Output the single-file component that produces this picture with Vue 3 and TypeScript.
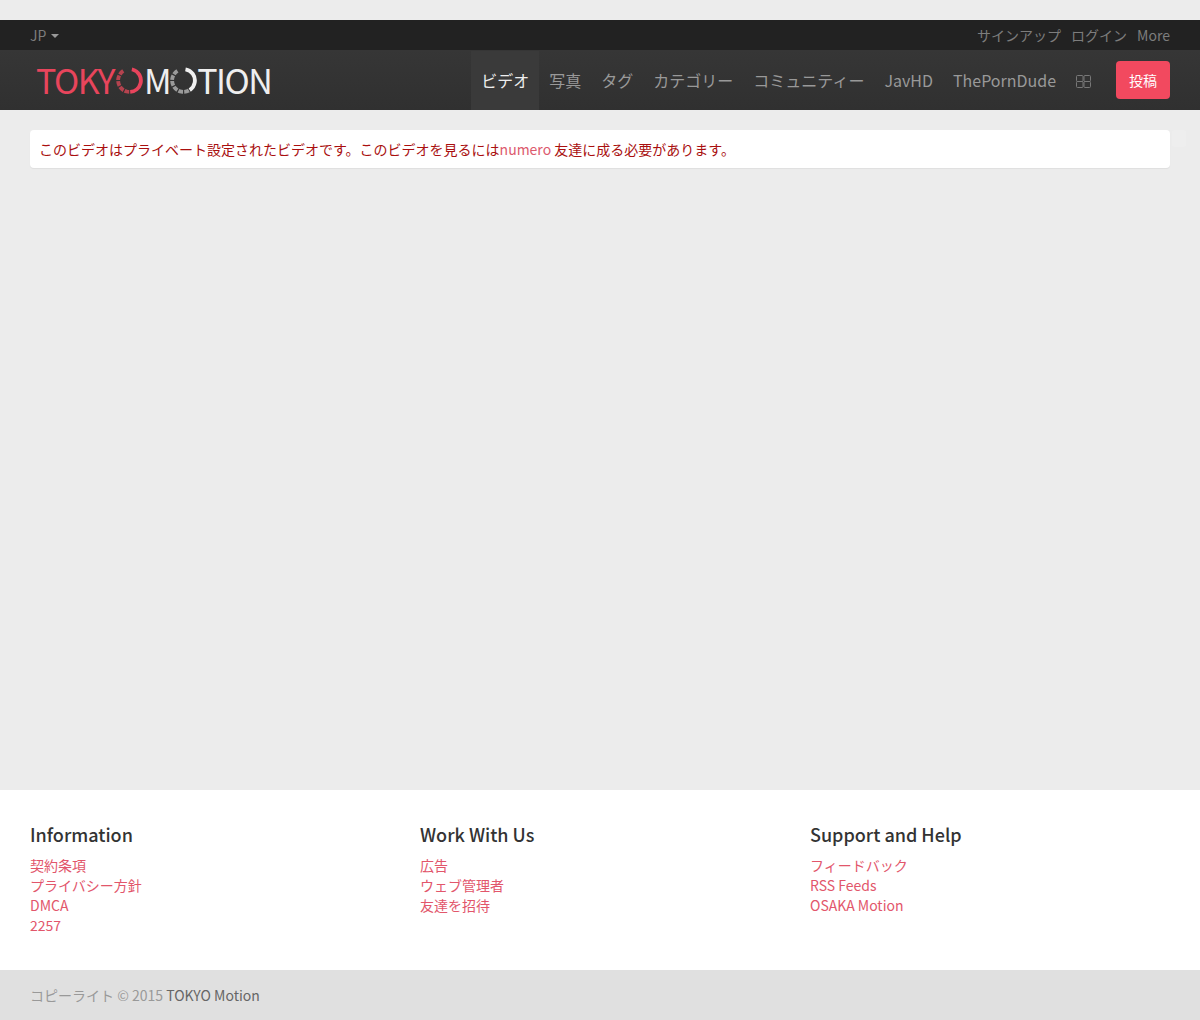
<script setup lang="ts">
const navItems: string[] = ['写真', 'タグ', 'カテゴリー', 'コミュニティー', 'JavHD', 'ThePornDude']
const footerColumns: { title: string; links: string[] }[] = [
  { title: 'Information', links: ['契約条項', 'プライバシー方針', 'DMCA', '2257'] },
  { title: 'Work With Us', links: ['広告', 'ウェブ管理者', '友達を招待'] },
  { title: 'Support and Help', links: ['フィードバック', 'RSS Feeds', 'OSAKA Motion'] },
]
</script>

<template>
  <div class="page">
    <div class="topbar">
      <a class="lang">JP <span class="caret"></span></a>
      <div class="top-links">
        <a>サインアップ</a>
        <a>ログイン</a>
        <a>More</a>
      </div>
    </div>
    <header class="navbar">
      <div class="logo">
        <span class="logo-red">TOKY</span>
        <svg class="ring ring-first" viewBox="0 0 28 28" width="27" height="27">
          <circle cx="14" cy="14" r="11.8" fill="none" stroke="#e8445c" stroke-width="4" stroke-dasharray="33 40" transform="rotate(-75 14 14)" />
          <circle cx="14" cy="14" r="11.8" fill="none" stroke="#b5434f" stroke-width="4" stroke-dasharray="5 1.2 5 1.2 5 1.2 5 1.2 5 40" stroke-dashoffset="-34" transform="rotate(-75 14 14)" />
        </svg>
        <span class="logo-white logo-m">M</span>
        <svg class="ring" viewBox="0 0 28 28" width="27" height="27">
          <circle cx="14" cy="14" r="11.8" fill="none" stroke="#f0f0f0" stroke-width="4" stroke-dasharray="28 50" transform="rotate(-80 14 14)" />
          <circle cx="14" cy="14" r="11.8" fill="none" stroke="#9a9a9a" stroke-width="4" stroke-dasharray="5 1.2 5 1.2 5 1.2 5 1.2 5 1.2 5 40" stroke-dashoffset="-29" transform="rotate(-80 14 14)" />
        </svg>
        <span class="logo-white logo-tion">TION</span>
      </div>
      <nav class="nav">
        <a class="nav-item active">ビデオ</a>
        <a v-for="item in navItems" :key="item" class="nav-item">{{ item }}</a>
        <a class="nav-item icon-item" aria-label="グリッド">
          <svg width="15" height="13" viewBox="0 0 15 13" fill="none" stroke="#787878" stroke-width="1">
            <rect x="0.5" y="0.5" width="6.5" height="6" rx="1" />
            <rect x="0.5" y="6.5" width="6.5" height="6" rx="1" />
            <rect x="8" y="0.5" width="6.5" height="6" rx="1" />
            <rect x="8" y="6.5" width="6.5" height="6" rx="1" />
          </svg>
        </a>
      </nav>
      <a class="post-btn">投稿</a>
    </header>

    <main class="main">
      <div class="alert">
        このビデオはプライベート設定されたビデオです。このビデオを見るには<a class="alert-link">numero</a> 友達に成る必要があります。
        <span class="close-ghost"></span>
      </div>
    </main>

    <footer>
      <div class="footer-cols">
        <section v-for="col in footerColumns" :key="col.title" class="footer-col">
          <h4>{{ col.title }}</h4>
          <a v-for="link in col.links" :key="link">{{ link }}</a>
        </section>
      </div>
      <div class="copyright">コピーライト © 2015 <a>TOKYO Motion</a></div>
    </footer>
  </div>
</template>

<style>
html, body {
  margin: 0;
  background: #ececec;
}
</style>

<style scoped>
.page {
  width: 1200px;
  height: 1020px;
  padding-top: 20px;
  box-sizing: border-box;
  display: flex;
  flex-direction: column;
  font-family: "Noto Sans CJK JP", "Noto Sans", sans-serif;
  font-size: 14px;
  line-height: 20px;
  color: #333;
  background: #ececec;
}
.topbar {
  height: 30px;
  flex: none;
  background: #222;
  padding: 0 30px;
  display: flex;
  justify-content: space-between;
  align-items: center;
  color: #7d7d7d;
}
.lang {
  display: flex;
  align-items: center;
  gap: 5px;
}
.caret {
  width: 0;
  height: 0;
  border-left: 4.5px solid transparent;
  border-right: 4.5px solid transparent;
  border-top: 4px solid #999;
  margin-top: 1px;
}
.top-links {
  display: flex;
  gap: 10px;
}
.navbar {
  height: 60px;
  flex: none;
  background: linear-gradient(#363636, #303030);
  padding: 0 30px;
  display: flex;
  align-items: center;
}
.logo {
  display: flex;
  align-items: center;
  margin-left: 6px;
  font-size: 34px;
  line-height: 40px;
  white-space: nowrap;
}
.logo-red {
  color: #e8455c;
  letter-spacing: -1.5px;
}
.logo-white {
  color: #eeeeee;
}
.ring {
  flex: none;
}
.ring-first {
  margin-left: 2px;
}
.logo-m {
  margin-left: 1px;
  letter-spacing: -1.5px;
}
.logo-tion {
  letter-spacing: -1.5px;
}
.nav {
  margin-left: auto;
  align-self: stretch;
  display: flex;
  align-items: stretch;
  padding-top: 1px;
}
.nav-item {
  font-size: 16px;
  color: #999;
  padding: 0 10px 2px;
  display: flex;
  align-items: center;
}
.nav-item.active {
  color: #eee;
  background: #3a3a3a;
}
.icon-item svg {
  margin-top: 3px;
}
.post-btn {
  margin-left: 15px;
  width: 54px;
  height: 38px;
  border-radius: 4px;
  background: #f2495f;
  color: #fff;
  display: flex;
  align-items: center;
  justify-content: center;
}
.main {
  flex: 1;
  padding: 20px 30px 0;
}
.alert {
  position: relative;
  height: 38px;
  box-sizing: border-box;
  padding: 9px;
  background: #fff;
  border-radius: 4px;
  box-shadow: 0 1px 1px rgba(0, 0, 0, 0.06);
  color: #a90f0f;
  white-space: nowrap;
}
.alert-link {
  color: #dc5a6d;
}
.close-ghost {
  position: absolute;
  left: 1142px;
  top: 0;
  width: 14px;
  height: 17px;
  border-radius: 3px;
  background: #eeeeee;
}
footer {
  flex: none;
}
.footer-cols {
  height: 180px;
  box-sizing: border-box;
  background: #fff;
  padding: 29px 30px 0;
  display: grid;
  grid-template-columns: repeat(3, 390px);
}
.footer-col {
  display: flex;
  flex-direction: column;
  align-items: flex-start;
}
.footer-col h4 {
  margin: 0 0 6px;
  font-size: 18px;
  line-height: 30px;
  font-weight: 500;
  color: #333;
}
.footer-col a {
  color: #e2566b;
}
.copyright {
  height: 50px;
  background: #e0e0e0;
  padding: 0 30px;
  display: flex;
  align-items: center;
  white-space: pre;
  color: #999;
}
.copyright a {
  color: #666;
}
</style>
